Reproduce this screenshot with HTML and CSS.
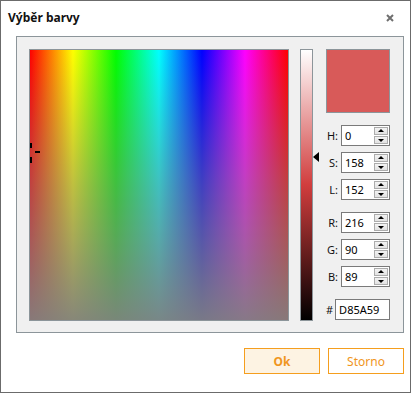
FILE: index.html
```html
<!DOCTYPE html>
<html lang="cs">
<head>
<meta charset="utf-8">
<title>Výběr barvy</title>
<link rel="stylesheet" href="styles.css">
</head>
<body>
<div class="dialog">
  <div class="titlebar">
    <span class="title">Výběr barvy</span>
    <svg class="close" width="8" height="8" viewBox="0 0 8 8"><path d="M1 1 L7 7 M7 1 L1 7" stroke="#6f6f6f" stroke-width="2" fill="none"/></svg>
  </div>
  <div class="panel">
    <div class="spectrum">
      <span class="cross cross-top"></span>
      <span class="cross cross-bottom"></span>
      <span class="cross cross-right"></span>
    </div>
    <div class="lumwrap">
      <div class="lum"></div>
      <span class="lum-marker"></span>
    </div>
    <div class="side">
      <div class="preview"></div>
      <div class="group">
        <div class="row"><span class="lbl">H:</span><div class="spin"><span class="val">0</span><span class="btns"><span class="up"></span><span class="down"></span></span></div></div>
        <div class="row"><span class="lbl">S:</span><div class="spin"><span class="val">158</span><span class="btns"><span class="up"></span><span class="down"></span></span></div></div>
        <div class="row"><span class="lbl">L:</span><div class="spin"><span class="val">152</span><span class="btns"><span class="up"></span><span class="down"></span></span></div></div>
      </div>
      <div class="group">
        <div class="row"><span class="lbl">R:</span><div class="spin"><span class="val">216</span><span class="btns"><span class="up"></span><span class="down"></span></span></div></div>
        <div class="row"><span class="lbl">G:</span><div class="spin"><span class="val">90</span><span class="btns"><span class="up"></span><span class="down"></span></span></div></div>
        <div class="row"><span class="lbl">B:</span><div class="spin"><span class="val">89</span><span class="btns"><span class="up"></span><span class="down"></span></span></div></div>
      </div>
      <div class="row hexrow"><span class="lbl">#</span><div class="hex">D85A59</div></div>
    </div>
  </div>
  <div class="buttons">
    <button class="btn btn-ok">Ok</button>
    <button class="btn">Storno</button>
  </div>
</div>
</body>
</html>
```

FILE: styles.css
```css
* { box-sizing: border-box; }
html, body { margin: 0; padding: 0; background: #fff; }
body { font-family: "Noto Sans", "Open Sans", sans-serif; font-size: 11px; color: #000; }

.dialog {
  width: 411px;
  height: 393px;
  border: 1px solid #6b6b6b;
  background: #fff;
}

.titlebar {
  height: 35px;
  display: flex;
  align-items: center;
  justify-content: space-between;
  padding: 0 16px 3px 7px;
}
.title { font-weight: bold; font-size: 12px; color: #111; }
.close { display: block; margin-top: 1px; }

.panel {
  margin: 0 6px 0 15px;
  height: 297px;
  background: #f0f0f0;
  border: 1px solid #8c959a;
  padding: 12px 13px 11px 12px;
  display: flex;
}

.spectrum {
  position: relative;
  overflow: hidden;
  width: 260px;
  height: 272px;
  border: 1px solid #8c959a;
  background:
    linear-gradient(to bottom, rgba(128,128,128,0) 0%, rgba(128,128,128,0.5) 50%, rgba(128,128,128,0.94) 100%),
    linear-gradient(to right, #ff0000 0%, #ffff00 16.67%, #00ff00 33.33%, #00ffff 50%, #0000ff 66.67%, #ff00ff 83.33%, #ff0000 100%);
}
.cross { position: absolute; background: #000; }
.cross-top { left: 0; top: 93px; width: 2px; height: 5px; }
.cross-bottom { left: 0; top: 107px; width: 2px; height: 6px; }
.cross-right { left: 5px; top: 101px; width: 5px; height: 2px; }

.lumwrap {
  position: relative;
  margin-left: 11px;
  width: 13px;
  height: 272px;
}
.lum {
  width: 13px;
  height: 272px;
  border: 1px solid #8c959a;
  background: linear-gradient(to bottom, #ffffff 0%, #d13d3d 50%, #000000 100%);
}
.lum-marker {
  position: absolute;
  left: 13px;
  top: 103px;
  width: 0;
  height: 0;
  border-top: 5px solid transparent;
  border-bottom: 5px solid transparent;
  border-right: 6px solid #000;
}

.side {
  margin-left: 13px;
  width: 64px;
  display: flex;
  flex-direction: column;
}
.preview {
  width: 64px;
  height: 64px;
  background: #d85a59;
  border: 1px solid #8c959a;
}
.group {
  margin-top: 12px;
  display: flex;
  flex-direction: column;
  gap: 6px;
}
.row {
  display: flex;
  align-items: center;
  justify-content: flex-end;
  height: 21px;
}
.lbl {
  margin-right: 3px;
  font-size: 11px;
  color: #111;
}
.spin {
  width: 49px;
  height: 21px;
  background: #fff;
  border: 1px solid #7a7a7a;
  display: flex;
  align-items: center;
  justify-content: space-between;
  padding: 0 1px 0 3px;
}
.val { font-size: 11px; }
.btns {
  display: flex;
  flex-direction: column;
  gap: 1px;
  width: 14px;
}
.up, .down {
  position: relative;
  height: 8px;
  background: linear-gradient(#f3f3f3, #e2e2e2);
  border: 1px solid #acacac;
}
.up::after, .down::after {
  content: "";
  position: absolute;
  left: 3px;
  width: 0;
  height: 0;
  border-left: 3px solid transparent;
  border-right: 3px solid transparent;
}
.up::after { top: 1px; border-bottom: 3px solid #000; }
.down::after { top: 2px; border-top: 3px solid #000; }

.hexrow { margin-top: 12px; }
.hexrow .lbl { margin-right: 2px; }
.hex {
  width: 55px;
  height: 21px;
  border: 1px solid #7a7a7a;
  background: #fff;
  padding: 0 3px;
  display: flex;
  align-items: center;
  font-size: 11px;
}

.buttons {
  display: flex;
  justify-content: flex-end;
  gap: 8px;
  margin-top: 15px;
  padding-right: 6px;
}
.btn {
  width: 76px;
  height: 26px;
  border: 1px solid #f59e1e;
  background: #fff;
  color: #f0961e;
  font-family: "Noto Sans", "Open Sans", sans-serif;
  font-size: 12px;
  padding: 0;
}
.btn-ok { background: #fdf3e3; font-weight: bold; }
```
